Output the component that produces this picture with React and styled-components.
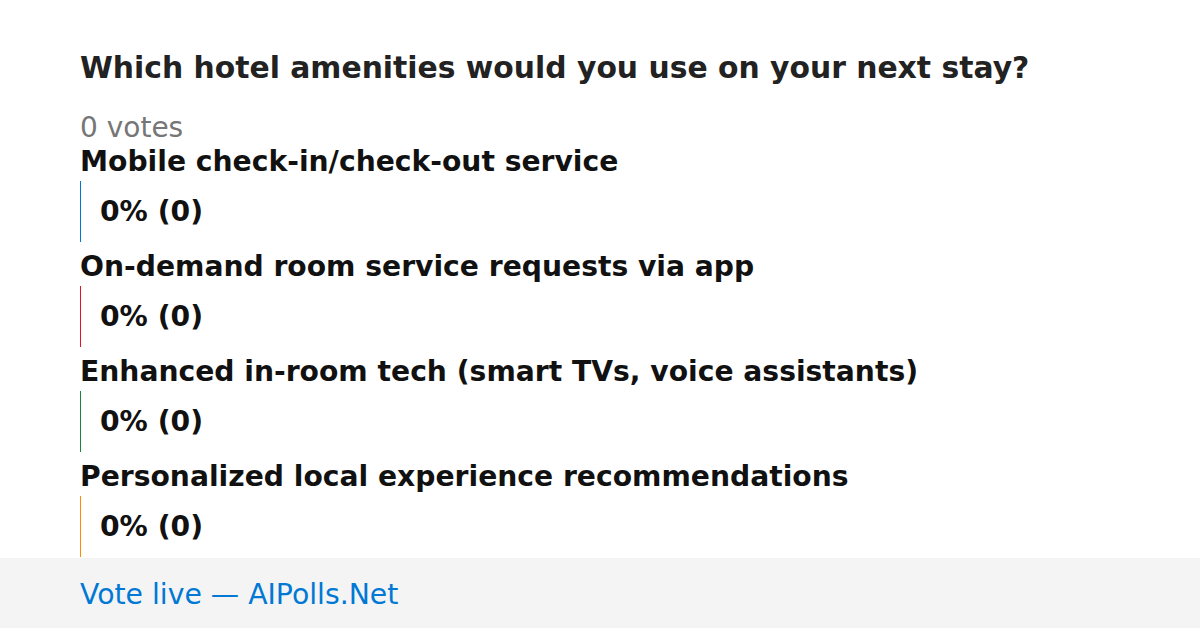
import React from "react";
import styled, { createGlobalStyle } from "styled-components";

const Global = createGlobalStyle`
  html, body {
    margin: 0;
    padding: 0;
    background: #ffffff;
    font-family: "DejaVu Sans", "Liberation Sans", sans-serif;
  }
`;

const Page = styled.div`
  width: 1200px;
  height: 628px;
  display: flex;
  flex-direction: column;
  overflow: hidden;
`;

const Main = styled.div`
  flex: 1;
  padding: 50px 80px 0;
`;

const Title = styled.h1`
  margin: 0;
  font-size: 29.8px;
  line-height: 36px;
  font-weight: bold;
  color: #222222;
  white-space: nowrap;
`;

const Votes = styled.div`
  margin-top: 27px;
  font-size: 28px;
  line-height: 30px;
  color: #767676;
`;

const List = styled.div`
  display: flex;
  flex-direction: column;
  gap: 6px;
`;

const Option = styled.div`
  display: flex;
  flex-direction: column;
`;

const Label = styled.div`
  font-size: 28.2px;
  font-weight: bold;
  line-height: 38px;
  color: #111111;
  white-space: nowrap;
`;

const Bar = styled.div`
  height: 61px;
  border-left: 1px solid ${(p) => p.color};
  padding-left: 19px;
  display: flex;
  align-items: center;
  font-size: 28.2px;
  font-weight: bold;
  color: #111111;
`;

const Footer = styled.div`
  flex-shrink: 0;
  height: 70px;
  background: #f4f4f4;
  padding: 0 80px;
  display: flex;
  align-items: center;
`;

const Link = styled.a`
  font-size: 28.3px;
  color: #0078d4;
  text-decoration: none;
  margin-top: 2px;
`;

const options = [
  { label: "Mobile check-in/check-out service", color: "#0078d4" },
  { label: "On-demand room service requests via app", color: "#e81123" },
  { label: "Enhanced in-room tech (smart TVs, voice assistants)", color: "#10893e" },
  { label: "Personalized local experience recommendations", color: "#ff8c00" },
];

export default function App() {
  return (
    <>
      <Global />
      <Page>
        <Main>
          <Title>Which hotel amenities would you use on your next stay?</Title>
          <Votes>0 votes</Votes>
          <List>
            {options.map((o) => (
              <Option key={o.label}>
                <Label>{o.label}</Label>
                <Bar color={o.color}>0% (0)</Bar>
              </Option>
            ))}
          </List>
        </Main>
        <Footer>
          <Link href="#">Vote live — AIPolls.Net</Link>
        </Footer>
      </Page>
    </>
  );
}
